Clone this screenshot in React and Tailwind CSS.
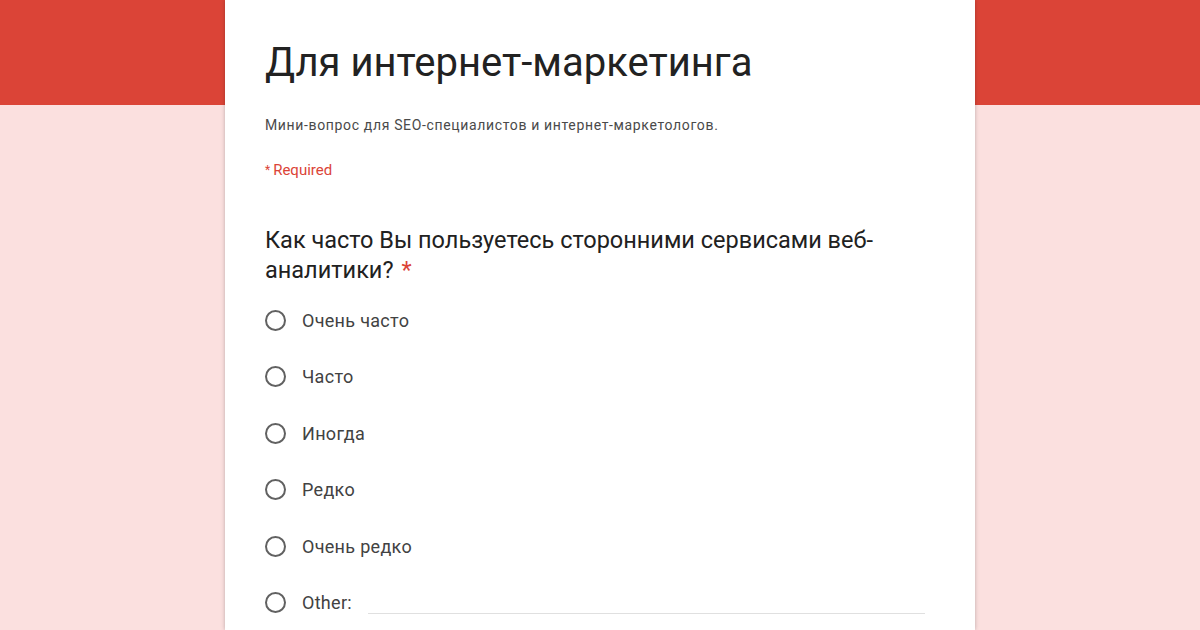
import React from "react";

const options = ["Очень часто", "Часто", "Иногда", "Редко", "Очень редко"];

function Radio() {
  return <div className="w-[21px] h-[21px] rounded-full border-2 border-[#616161] shrink-0" />;
}

export default function App() {
  return (
    <div className="w-[1200px] h-[630px] overflow-hidden bg-[#fbe0df] relative" style={{ fontFamily: "Roboto, 'Noto Sans', sans-serif" }}>
      <div className="absolute top-0 left-0 w-full h-[105px] bg-[#db4437]" />
      <div className="relative mx-auto w-[750px] h-[630px] bg-white shadow-[0_0_4px_rgba(0,0,0,0.25)] px-[40px] pt-[39px]">
        <h1 className="text-[40px] leading-[48px] text-[#222] font-normal">Для интернет-маркетинга</h1>
        <p className="mt-[29px] text-[14px] leading-[18px] tracking-[0.65px] text-[#4a4a4a]">Мини-вопрос для SEO-специалистов и интернет-маркетологов.</p>
        <p className="mt-[27px] text-[15px] leading-[18px] text-[#db4437] flex items-start gap-[3px]">
          <span className="text-[12px]">*</span>
          <span>Required</span>
        </p>
        <div className="mt-[46px] text-[23.5px] leading-[30px] text-[#212121] w-[630px]">
          Как часто Вы пользуетесь сторонними сервисами веб-аналитики?<span className="ml-[8px] text-[#db4437]">*</span>
        </div>
        <div className="mt-[7px] flex flex-col">
          {options.map((o) => (
            <div key={o} className="flex items-center h-[56.5px] gap-[16px]">
              <Radio />
              <span className="text-[18px] tracking-[0.3px] text-[#424242]">{o}</span>
            </div>
          ))}
          <div className="flex items-center h-[56.5px] gap-[16px]">
            <Radio />
            <span className="text-[18px] tracking-[0.3px] text-[#424242]">Other:</span>
            <div className="flex-1 self-end mb-[17px] mr-[10px] h-[1px] bg-[#e0e0e0]" />
          </div>
        </div>
      </div>
    </div>
  );
}
